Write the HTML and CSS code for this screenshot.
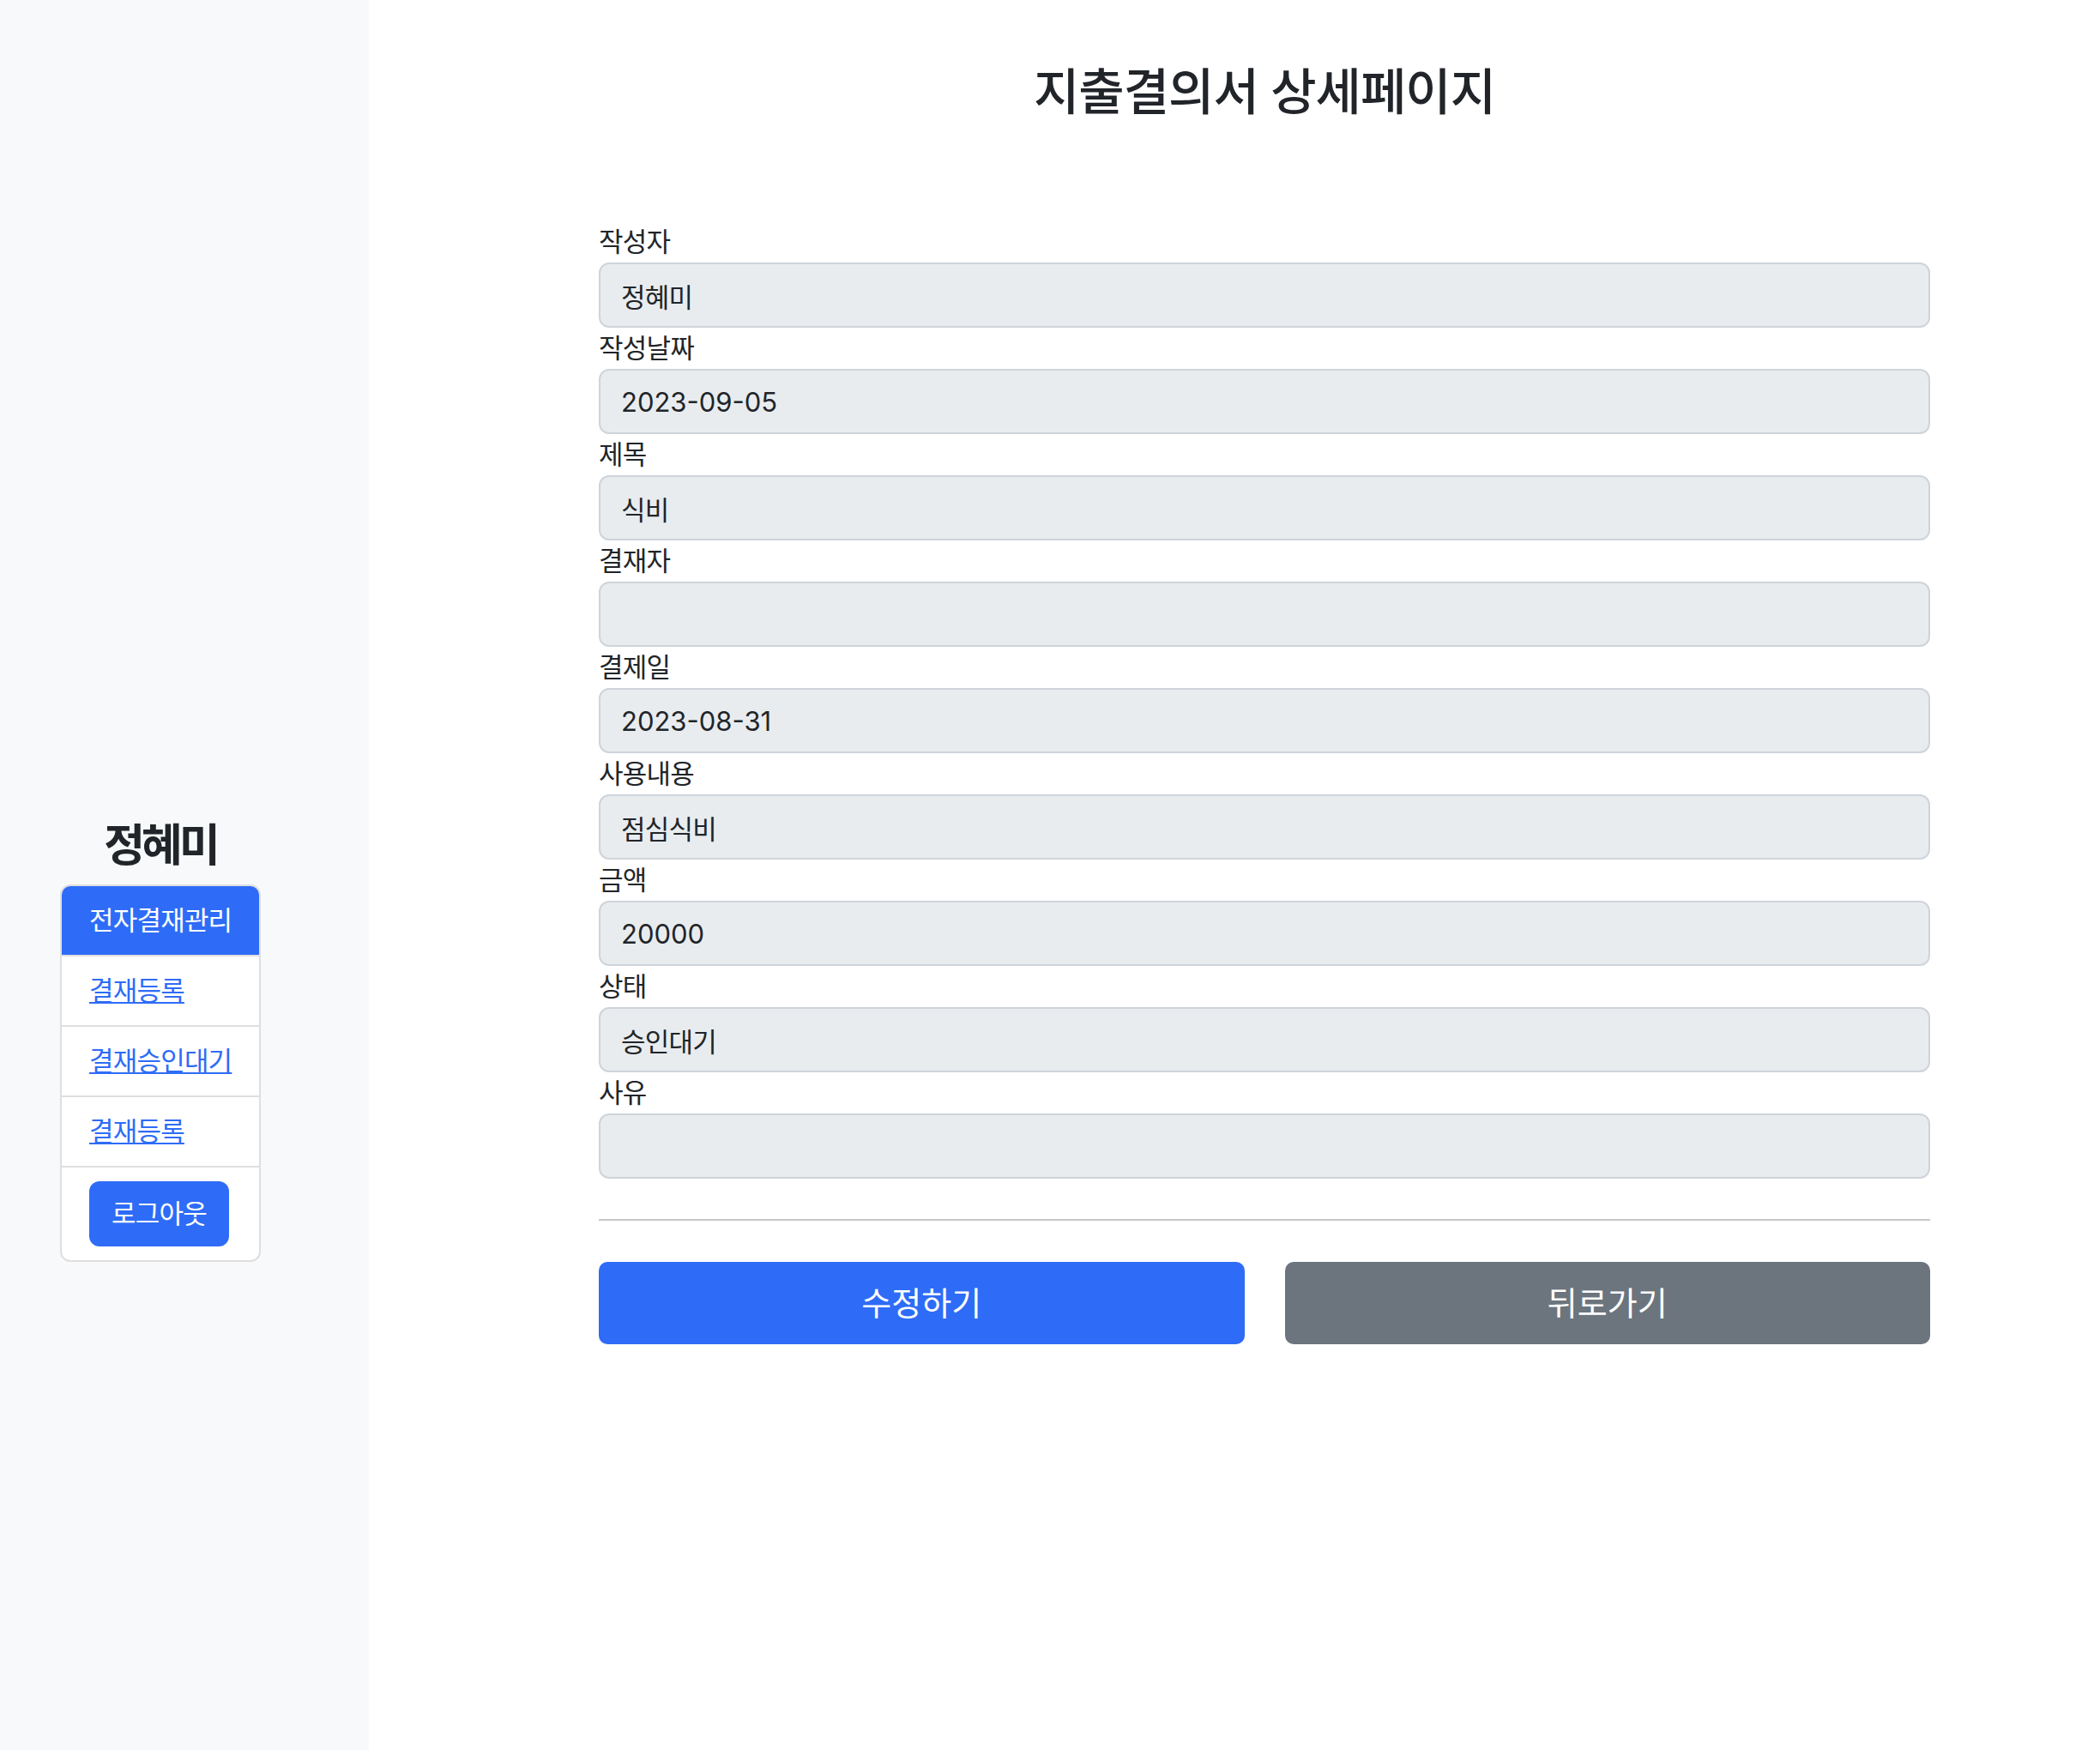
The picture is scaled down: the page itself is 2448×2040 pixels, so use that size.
FILE: index.html
```html
<!DOCTYPE html>
<html lang="ko">
<head>
<meta charset="utf-8">
<title>지출결의서 상세페이지</title>
<link rel="stylesheet" href="styles.css">
</head>
<body>
<div class="page">
  <aside class="sidebar">
    <div class="side-inner">
      <h3 class="user-name">정혜미</h3>
      <ul class="menu">
        <li class="menu-item active">전자결재관리</li>
        <li class="menu-item"><a href="#">결재등록</a></li>
        <li class="menu-item"><a href="#">결재승인대기</a></li>
        <li class="menu-item"><a href="#">결재등록</a></li>
        <li class="menu-item"><button class="btn-logout" type="button">로그아웃</button></li>
      </ul>
    </div>
  </aside>
  <main class="main">
    <h2 class="title">지출결의서 상세페이지</h2>
    <form class="detail-form">
      <label class="field-label">작성자</label>
      <input class="field-input" readonly value="정혜미">
      <label class="field-label">작성날짜</label>
      <input class="field-input num" readonly value="2023-09-05">
      <label class="field-label">제목</label>
      <input class="field-input" readonly value="식비">
      <label class="field-label">결재자</label>
      <input class="field-input" readonly value="">
      <label class="field-label">결제일</label>
      <input class="field-input num" readonly value="2023-08-31">
      <label class="field-label">사용내용</label>
      <input class="field-input" readonly value="점심식비">
      <label class="field-label">금액</label>
      <input class="field-input num" readonly value="20000">
      <label class="field-label">상태</label>
      <input class="field-input" readonly value="승인대기">
      <label class="field-label">사유</label>
      <input class="field-input" readonly value="">
    </form>
    <hr class="divider">
    <div class="actions">
      <button class="btn btn-primary" type="button">수정하기</button>
      <button class="btn btn-secondary" type="button">뒤로가기</button>
    </div>
  </main>
</div>
</body>
</html>
```

FILE: styles.css
```css
html, body {
  margin: 0;
  padding: 0;
  background: #ffffff;
}

body {
  font-family: "Inter", "Noto Sans CJK KR", sans-serif;
  color: #212529;
}

.page {
  display: flex;
  min-height: 2040px;
}

.sidebar {
  width: 430px;
  flex: 0 0 430px;
  background: #f8f9fa;
}

.side-inner {
  margin-left: 70px;
  width: 234px;
  padding-top: 952px;
}

.user-name {
  margin: 0 0 12px 0;
  text-align: center;
  font-size: 52px;
  line-height: 67px;
  font-weight: 700;
  letter-spacing: -4px;
  color: #212529;
}

.menu {
  list-style: none;
  margin: 0;
  padding: 0;
  border: 2px solid #dfdfdf;
  border-radius: 12px;
  background: #ffffff;
  overflow: hidden;
}

.menu-item {
  padding: 16px 32px;
  font-size: 31px;
  line-height: 48px;
  letter-spacing: -0.8px;
  white-space: nowrap;
  border-top: 2px solid #dfdfdf;
}

.menu-item:first-child {
  border-top: 0;
}

.menu-item.active {
  background: #2e6cf7;
  color: #ffffff;
  margin: -2px -2px 0 -2px;
  padding: 18px 34px 16px 34px;
  border-top: 0;
}

.menu-item a {
  color: #2e6cf7;
  text-decoration: underline;
  text-decoration-thickness: 2px;
  text-underline-offset: 2px;
}

.btn-logout {
  display: block;
  height: 76px;
  padding: 0 26px;
  border: 0;
  border-radius: 12px;
  background: #2e6cf7;
  color: #ffffff;
  font-family: inherit;
  font-size: 31px;
  letter-spacing: -0.8px;
  line-height: 76px;
}

.main {
  flex: 1;
  padding: 69px 0 0 268px;
}

.title {
  width: 1552px;
  margin: 0;
  text-align: center;
  font-size: 58px;
  line-height: 77px;
  font-weight: 500;
  letter-spacing: -1px;
  color: #212529;
}

.detail-form {
  width: 1552px;
  margin-top: 112px;
  display: flex;
  flex-direction: column;
}

.field-label {
  display: block;
  font-size: 31px;
  line-height: 48px;
  letter-spacing: -0.8px;
  color: #212529;
}

.field-input {
  display: block;
  box-sizing: border-box;
  width: 100%;
  height: 76px;
  margin: 0;
  padding: 0 24px;
  border: 2px solid #ced4da;
  border-radius: 12px;
  background: #e9ecef;
  color: #212529;
  font-family: inherit;
  font-size: 31px;
  letter-spacing: -0.8px;
  outline: none;
}

.field-input.num {
  font-size: 31px;
  letter-spacing: 0;
}

.divider {
  width: 1552px;
  margin: 47px 0 48px 0;
  border: 0;
  border-top: 2px solid #c5c6c7;
  height: 0;
}

.actions {
  width: 1552px;
  display: grid;
  grid-template-columns: 1fr 1fr;
  gap: 47px;
}

.btn {
  height: 96px;
  border: 0;
  border-radius: 10px;
  color: #ffffff;
  font-family: inherit;
  font-size: 38px;
  letter-spacing: 0;
  line-height: 96px;
  padding: 0;
}

.btn-primary {
  background: #2e6cf7;
}

.btn-secondary {
  background: #6c757d;
}
```
